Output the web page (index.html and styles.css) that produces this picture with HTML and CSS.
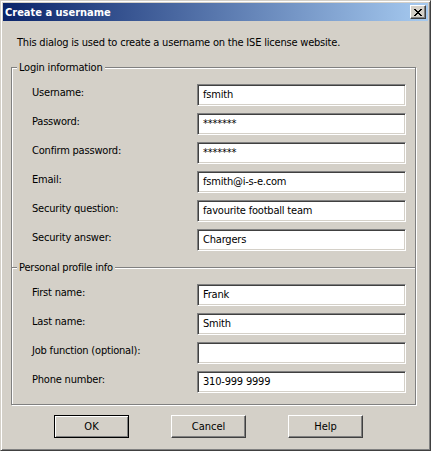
FILE: index.html
```html
<!DOCTYPE html>
<html>
<head>
<meta charset="utf-8">
<title>Create a username</title>
<link rel="stylesheet" href="styles.css">
</head>
<body>
<div class="window">
  <div class="titlebar">
    <span class="title">Create a username</span>
    <button class="close" aria-label="Close">
      <svg width="8" height="7" viewBox="0 0 8 7" shape-rendering="crispEdges">
        <path d="M0 0h2v1H0zM6 0h2v1H6zM1 1h2v1H1zM5 1h2v1H5zM2 2h4v1H2zM3 3h2v1H3zM2 4h4v1H2zM1 5h2v1H1zM5 5h2v1H5zM0 6h2v1H0zM6 6h2v1H6z" fill="#000"/>
      </svg>
    </button>
  </div>
  <div class="content">
    <p class="intro">This dialog is used to create a username on the ISE license website.</p>
    <div class="group group-top">
      <div class="legend">Login information</div>
      <div class="rows">
        <div class="row"><span class="label">Username:</span><div class="field">fsmith</div></div>
        <div class="row"><span class="label">Password:</span><div class="field">*******</div></div>
        <div class="row"><span class="label">Confirm password:</span><div class="field">*******</div></div>
        <div class="row"><span class="label">Email:</span><div class="field">fsmith@i-s-e.com</div></div>
        <div class="row"><span class="label">Security question:</span><div class="field">favourite football team</div></div>
        <div class="row"><span class="label">Security answer:</span><div class="field">Chargers</div></div>
      </div>
    </div>
    <div class="group group-bottom">
      <div class="legend">Personal profile info</div>
      <div class="rows">
        <div class="row"><span class="label">First name:</span><div class="field">Frank</div></div>
        <div class="row"><span class="label">Last name:</span><div class="field">Smith</div></div>
        <div class="row"><span class="label">Job function (optional):</span><div class="field"></div></div>
        <div class="row"><span class="label">Phone number:</span><div class="field">310-999 9999</div></div>
      </div>
    </div>
    <div class="buttons">
      <button class="btn btn-default">OK</button>
      <button class="btn">Cancel</button>
      <button class="btn">Help</button>
    </div>
  </div>
</div>
</body>
</html>
```
FILE: styles.css
```css
* { box-sizing: border-box; }
html, body { margin: 0; padding: 0; background: #d4d0c8; }
body {
  font-family: "DejaVu Sans Condensed", "Liberation Sans", sans-serif;
  font-size: 11px;
  letter-spacing: -0.2px;
  color: #000;
}
.window {
  width: 431px;
  height: 451px;
  background: #d4d0c8;
  border: 1px solid;
  border-color: #d4d0c8 #404040 #404040 #d4d0c8;
  box-shadow: inset 1px 1px #fff, inset -1px -1px #808080;
  padding: 2px;
  display: flex;
  flex-direction: column;
}
.titlebar {
  height: 18px;
  background: linear-gradient(to right, #0a246a, #a6caf0);
  display: flex;
  align-items: center;
  justify-content: space-between;
  padding: 0 2px 0 2px;
}
.title {
  color: #fff;
  font-weight: bold;
  font-size: 11px;
  line-height: 13px;
  letter-spacing: 0;
}
.close {
  width: 16px;
  height: 14px;
  padding: 0;
  margin: 0;
  background: #d4d0c8;
  border: 1px solid;
  border-color: #fff #404040 #404040 #fff;
  box-shadow: inset -1px -1px #808080;
  display: flex;
  align-items: center;
  justify-content: center;
}
.close svg { display: block; }
.content {
  flex: 1;
  display: flex;
  flex-direction: column;
}
.intro {
  margin: 15px 0 0 14px;
  line-height: 13px;
  height: 13px;
}
.group {
  margin: 18px 0 0 8px;
  width: 405px;
  border: 1px solid #808080;
  box-shadow: inset 1px 1px #fff, 1px 1px #fff;
  padding: 0 0 0 20px;
}
.group-top {
  border-bottom: none;
  padding-bottom: 16px;
}
.group-bottom {
  margin-top: 0;
  padding-bottom: 11px;
}
.legend {
  margin: -7px 0 0 -15px;
  padding: 0 2px;
  width: fit-content;
  background: #d4d0c8;
  line-height: 13px;
  height: 13px;
}
.rows {
  margin-top: 10px;
  display: flex;
  flex-direction: column;
  gap: 7px;
}
.row {
  display: flex;
  align-items: flex-start;
  height: 22px;
}
.label {
  width: 165px;
  line-height: 13px;
  padding-top: 2px;
}
.field {
  width: 209px;
  height: 22px;
  background: #fff;
  border: 1px solid;
  border-color: #808080 #fff #fff #808080;
  box-shadow: inset 1px 1px #404040, inset -1px -1px #d4d0c8;
  padding: 0 0 0 5px;
  line-height: 20px;
}
.buttons {
  margin: 10px 0 0 51px;
  display: flex;
  gap: 42px;
}
.btn {
  width: 75px;
  height: 23px;
  padding: 0;
  margin: 0;
  font: inherit;
  color: #000;
  background: #d4d0c8;
  border: 1px solid;
  border-color: #fff #404040 #404040 #fff;
  box-shadow: inset -1px -1px #808080;
  line-height: 13px;
}
.btn-default {
  border: 1px solid #000;
  box-shadow: inset 1px 1px #fff, inset -1px -1px #808080;
}
```
